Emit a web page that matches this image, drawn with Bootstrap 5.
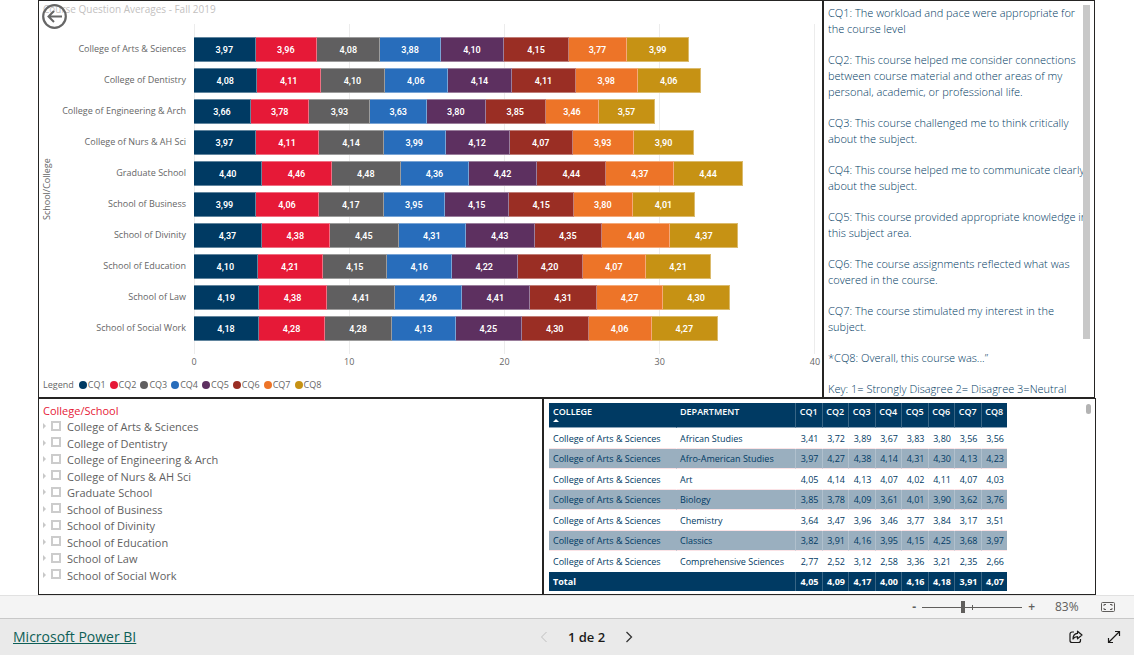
<!DOCTYPE html>
<html lang="en">
<head>
<meta charset="utf-8">
<meta name="viewport" content="width=device-width, initial-scale=1">
<title>Course Question Averages - Fall 2019</title>
<link rel="stylesheet" href="https://cdn.jsdelivr.net/npm/bootstrap@5.3.0/dist/css/bootstrap.min.css">
<style>
  :root { --ink: #252423; --navy: #003a63; --soft: #666; }
  body { font-family: "Open Sans", "Noto Sans", sans-serif; font-size: 9px; line-height: 12px; color: var(--soft); background: #fff; }
  button { font: inherit; color: inherit; background: none; border: 0; padding: 0; line-height: 0; }
  .stage { padding: 0 39px 0 38px; }
  .upper { display: grid; grid-template-columns: 785fr 272fr; }
  .lower { display: grid; grid-template-columns: 505fr 553fr; margin-right: -1px; min-height: 197px; }
  .panel { border: 1px solid var(--ink); min-width: 0; }

  .chart-panel { padding: 1px 7px 5px 4px; }
  .chart-title { font-size: 10px; line-height: 14px; color: #c3c1bf; margin: 0; font-weight: 400; }
  .back-btn { left: 3px; top: 3px; }
  .plot { margin-top: 8px; }
  .axis-name { width: 8px; writing-mode: vertical-rl; transform: rotate(180deg); line-height: 8px; text-align: center; }
  .names { width: 143px; padding: 9px 8px 0 0; }
  .names div { height: 31px; line-height: 31px; }
  .tracks { height: 330px; padding-top: 13px; }
  .grid-cells > div { border-left: 1px solid #ececec; }
  .grid-cells > div:last-child { border-right: 1px solid #ececec; }
  .bar-row { height: 25px; margin-bottom: 6px; }
  .seg { border: 1px solid rgba(255,255,255,.38); border-left: 0; color: #fff; font-family: Roboto, sans-serif; font-weight: 600; line-height: 24px; text-align: center; overflow: hidden; }
  .ticks { margin-left: 151px; height: 16px; line-height: 16px; }
  .ticks span { width: 0; display: flex; justify-content: center; }
  .key-row { margin-top: 8px; line-height: 14px; }
  .key-title { margin-right: 5px; }
  .key-dot { width: 8px; height: 8px; border-radius: 50%; margin-right: 1px; }

  .s1 { background: #003a63; } .s2 { background: #e61937; } .s3 { background: #605f60; } .s4 { background: #286dbb; }
  .s5 { background: #5d3060; } .s6 { background: #9a2e24; } .s7 { background: #ed7428; } .s8 { background: #c69214; }

  .notes { font-size: 11px; font-weight: 300; line-height: 16px; color: var(--navy); padding: 4px 0 0 4px; }
  .notes-clip { height: 391px; overflow: hidden; white-space: nowrap; }
  .notes p { margin: 0 0 15px; }
  .thumb-a { right: 4px; top: 4px; width: 7px; height: 334px; background: #c8c8c8; }
  .thumb-b { right: 4px; top: 5px; width: 5px; height: 10px; border-radius: 3px; background: #b3b3b3; }

  .slicer { padding: 4px; font-size: 11px; line-height: 15px; color: #5f5f5f; }
  .slicer legend { font-size: 11px; line-height: 15px; color: #e61937; margin: 0; }
  .pick { clear: both; height: 16px; }
  .pick:nth-of-type(odd) { height: 17px; }
  .pick input { appearance: none; width: 10px; height: 10px; border: 2px solid #ccc; background: #fff; margin: 0 6px 2px 5px; }
  .caret-r { border: 3px solid transparent; border-left: 3px solid #c8c8c8; border-right: 0; margin-bottom: 1px; }

  .scores { width: 458px; table-layout: fixed; border-collapse: separate; border-spacing: 0; color: var(--navy); margin: 4px 0 0 5px; }
  .scores th, .scores td { padding: 0 4px; line-height: 12px; white-space: nowrap; }
  .scores .num { text-align: right; padding: 0 3px 0 0; }
  .scores thead th { height: 25px; background: var(--navy); color: #fff; font-weight: 600; vertical-align: top; padding-top: 3px; border-bottom: 1px solid #8ba3b8; }
  .scores thead .num { text-align: center; padding: 3px 0 0; }
  .scores tbody td { height: 21px; padding-top: 1px; }
  .scores tbody .num { padding-top: 1px; }
  .scores tbody tr:nth-child(even) td { height: 20px; background: #9aafbf; border-bottom: 1px solid #fbe3e6; }
  .scores tbody tr:nth-child(odd):not(:last-child) td { border-bottom: 1px solid #fbe3e6; }
  .scores tfoot td { height: 19px; background: var(--navy); color: #fff; font-weight: 700; }
  .scores .num, .scores .dep { border-left: 1px solid transparent; }
  .scores .dep { padding-left: 3px; }
  .scores thead .num, .scores tbody tr:nth-child(even) .num, .scores tfoot .num { border-left-color: rgba(255,255,255,.22); }
  .caret-up { width: 0; border: 3px solid transparent; border-bottom: 3px solid #fff; border-top: 0; margin-top: 1px; }

  .zoombar { background: #f4f4f4; border-top: 1px solid #e1e1e1; height: 23px; padding-right: 19px; font-size: 12px; color: #605e5c; }
  .zoom-range { position: relative; width: 100px; height: 12px; margin: 0 6px; }
  .zoom-range::before { content: ""; position: absolute; left: 50px; top: 4px; width: 1px; height: 5px; background: #605e5c; }
  .zoom-range input { appearance: none; display: block; width: 100%; height: 12px; margin: 0; background: linear-gradient(#605e5c, #605e5c) center / 100% 1px no-repeat; }
  .zoom-range input::-webkit-slider-thumb { appearance: none; width: 4px; height: 12px; background: #605e5c; }
  .pct { width: 24px; margin: 0 22px 0 20px; }
  .foot { background: #eaeaea; border-top: 1px solid #c8c8c8; display: grid; grid-template-columns: 54fr auto 50fr; align-items: center; padding: 0 13px; min-height: 37px; color: #1b1a19; font-size: 13px; line-height: 20px; }
  .foot a { color: #0e5f57; font-size: 14px; }
  .page-no { margin: 0 20px; }
</style>
</head>
<body class="d-flex flex-column min-vh-100">

<main class="stage flex-grow-1">
  <div class="upper">
    <section class="panel chart-panel position-relative" aria-label="Course question averages">
      <h1 class="chart-title">Course Question Averages - Fall 2019</h1>
      <button type="button" class="back-btn position-absolute" aria-label="Back">
        <svg width="26" height="26" viewBox="0 0 26 26" fill="none" stroke="#666"><circle cx="12.500" cy="12.500" r="11.300" stroke-width="2.200"/><path d="M20 12.500H6M12 7l-5.500 5.500L12 18" stroke-width="2"/></svg>
      </button>
      <div class="plot d-flex">
        <div class="axis-name">School/College</div>
        <div class="names text-end" id="names"></div>
        <div class="tracks position-relative flex-grow-1">
          <div class="grid-cells position-absolute top-0 bottom-0 start-0 end-0 d-flex">
            <div class="flex-fill"></div><div class="flex-fill"></div><div class="flex-fill"></div><div class="flex-fill"></div>
          </div>
          <div class="position-relative" id="bars"></div>
        </div>
      </div>
      <div class="ticks d-flex justify-content-between"><span>0</span><span>10</span><span>20</span><span>30</span><span>40</span></div>
      <div class="key-row d-flex align-items-center" id="legend"><span class="key-title">Legend</span></div>
    </section>

    <section class="panel notes position-relative" aria-label="Questions">
      <div class="notes-clip">
        <p>CQ1: The workload and pace were appropriate for<br>the course level</p>
        <p>CQ2: This course helped me consider connections<br>between course material and other areas of my<br>personal, academic, or professional life.</p>
        <p>CQ3: This course challenged me to think critically<br>about the subject.</p>
        <p>CQ4: This course helped me to communicate clearly<br>about the subject.</p>
        <p>CQ5: This course provided appropriate knowledge in<br>this subject area.</p>
        <p>CQ6: The course assignments reflected what was<br>covered in the course.</p>
        <p>CQ7: The course stimulated my interest in the<br>subject.</p>
        <p>*CQ8: Overall, this course was...”</p>
        <p>Key: 1= Strongly Disagree 2= Disagree 3=Neutral</p>
      </div>
      <div class="thumb-a position-absolute"></div>
    </section>
  </div>

  <div class="lower">
    <fieldset class="panel slicer" id="slicer">
      <legend>College/School</legend>
    </fieldset>
    <section class="panel position-relative" aria-label="Department scores">
      <table class="scores">
        <colgroup><col style="width:127px"><col style="width:119px"><col span="8"></colgroup>
        <thead><tr id="head"><th>COLLEGE<div class="caret-up"></div></th><th class="dep">DEPARTMENT</th></tr></thead>
        <tbody id="rows"></tbody>
        <tfoot><tr id="total"><td>Total</td><td class="dep"></td></tr></tfoot>
      </table>
      <div class="thumb-b position-absolute"></div>
    </section>
  </div>
</main>

<div class="zoombar d-flex align-items-center justify-content-end">
  <button type="button" class="fw-bold" aria-label="Zoom out">-</button>
  <div class="zoom-range"><input type="range" min="0" max="100" value="40" aria-label="Zoom level"></div>
  <button type="button" class="fw-semibold" aria-label="Zoom in">+</button>
  <span class="pct">83%</span>
  <button type="button" aria-label="Fit to page">
    <svg width="14" height="10" viewBox="0 0 14 10" fill="none" stroke="#605e5c"><rect x=".5" y=".5" width="13" height="9" rx="1"/><path d="M3 4V2.500h2M9 2.500h2V4M11 6v1.500H9M5 7.500H3V6"/></svg>
  </button>
</div>

<footer class="foot">
  <div><a href="#">Microsoft Power BI</a></div>
  <nav class="d-flex align-items-center" aria-label="Pages">
    <button type="button" aria-label="Previous page" disabled><svg width="8" height="12" viewBox="0 0 8 12" fill="none" stroke="#c0c0c0"><path d="M6.500 1 1.500 6l5 5"/></svg></button>
    <span class="page-no fw-semibold">1 de 2</span>
    <button type="button" aria-label="Next page"><svg width="8" height="12" viewBox="0 0 8 12" fill="none" stroke="#333" stroke-width="1.300"><path d="M1.500 1l5 5-5 5"/></svg></button>
  </nav>
  <div class="d-flex justify-content-end align-items-center gap-4">
    <button type="button" aria-label="Share"><svg width="14" height="14" viewBox="0 0 14 14" fill="none" stroke="#1b1a19" stroke-width="1.200" stroke-linejoin="round"><path d="M5 2H3a2 2 0 0 0-2 2v6.500a2 2 0 0 0 2 2h6.500a2 2 0 0 0 2-2V9"/><path d="M8.500 1.200 13 5 8.500 8.800V6.600C6.500 6.600 5 7.200 4 9c0-3 1.500-5.300 4.500-5.600z"/></svg></button>
    <button type="button" aria-label="Full screen"><svg width="14" height="14" viewBox="0 0 14 14" fill="none" stroke="#1b1a19" stroke-width="1.200"><path d="M1.500 12.500l11-11M8 1.500h4.500V6M1.500 8v4.500H6"/></svg></button>
  </div>
</footer>

<script src="https://cdn.jsdelivr.net/npm/bootstrap@5.3.0/dist/js/bootstrap.bundle.min.js"></script>
<script>
  const AXIS_MAX = 40;
  const colleges = [
    ['College of Arts & Sciences', [3.97, 3.96, 4.08, 3.88, 4.10, 4.15, 3.77, 3.99]],
    ['College of Dentistry', [4.08, 4.11, 4.10, 4.06, 4.14, 4.11, 3.98, 4.06]],
    ['College of Engineering & Arch', [3.66, 3.78, 3.93, 3.63, 3.80, 3.85, 3.46, 3.57]],
    ['College of Nurs & AH Sci', [3.97, 4.11, 4.14, 3.99, 4.12, 4.07, 3.93, 3.90]],
    ['Graduate School', [4.40, 4.46, 4.48, 4.36, 4.42, 4.44, 4.37, 4.44]],
    ['School of Business', [3.99, 4.06, 4.17, 3.95, 4.15, 4.15, 3.80, 4.01]],
    ['School of Divinity', [4.37, 4.38, 4.45, 4.31, 4.43, 4.35, 4.40, 4.37]],
    ['School of Education', [4.10, 4.21, 4.15, 4.16, 4.22, 4.20, 4.07, 4.21]],
    ['School of Law', [4.19, 4.38, 4.41, 4.26, 4.41, 4.31, 4.27, 4.30]],
    ['School of Social Work', [4.18, 4.28, 4.28, 4.13, 4.25, 4.30, 4.06, 4.27]]
  ];
  const departments = [
    ['African Studies', [3.41, 3.72, 3.89, 3.67, 3.83, 3.80, 3.56, 3.56]],
    ['Afro-American Studies', [3.97, 4.27, 4.38, 4.14, 4.31, 4.30, 4.13, 4.23]],
    ['Art', [4.05, 4.14, 4.13, 4.07, 4.02, 4.11, 4.07, 4.03]],
    ['Biology', [3.85, 3.78, 4.09, 3.61, 4.01, 3.90, 3.62, 3.76]],
    ['Chemistry', [3.64, 3.47, 3.96, 3.46, 3.77, 3.84, 3.17, 3.51]],
    ['Classics', [3.82, 3.91, 4.16, 3.95, 4.15, 4.25, 3.68, 3.97]],
    ['Comprehensive Sciences', [2.77, 2.52, 3.12, 2.58, 3.36, 3.21, 2.35, 2.66]]
  ];
  const totals = [4.05, 4.09, 4.17, 4.00, 4.16, 4.18, 3.91, 4.07];
  const fmt = v => v.toFixed(2).replace('.', ',');
  const esc = s => s.replace('&', '&amp;');
  const add = (id, html) => document.getElementById(id).insertAdjacentHTML('beforeend', html);
  const cells = list => list.map(v => `<td class="num">${fmt(v)}</td>`).join('');

  colleges.forEach(([name, scores], i) => {
    add('names', `<div>${esc(name)}</div>`);
    add('bars', `<div class="bar-row d-flex">${scores.map((v, n) =>
      `<div class="seg s${n + 1}" style="width:${v / AXIS_MAX * 100}%">${fmt(v)}</div>`).join('')}</div>`);
    add('slicer', `<div class="pick d-flex align-items-center"><span class="caret-r"></span><input type="checkbox" id="pick${i}"><label for="pick${i}">${esc(name)}</label></div>`);
  });
  for (let n = 1; n <= 8; n++) {
    add('legend', `<span class="key-dot s${n}"></span><span class="me-1">CQ${n}</span>`);
    add('head', `<th class="num">CQ${n}</th>`);
  }
  departments.forEach(([name, scores]) =>
    add('rows', `<tr><td>College of Arts &amp; Sciences</td><td class="dep">${name}</td>${cells(scores)}</tr>`));
  add('total', cells(totals));
</script>
</body>
</html>
